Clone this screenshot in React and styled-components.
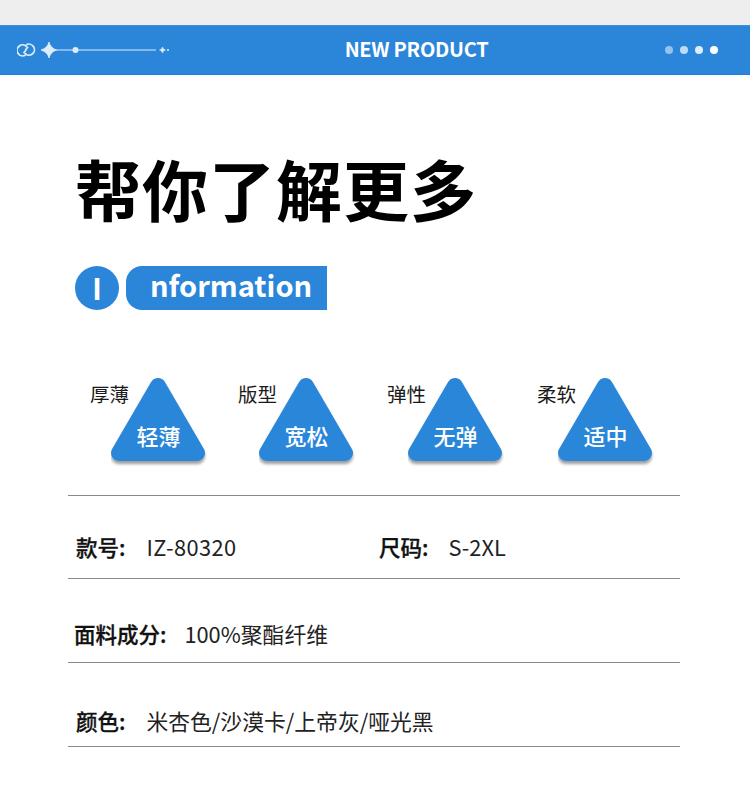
import React from 'react';
import styled, { createGlobalStyle } from 'styled-components';

const blue = '#2b86d9';
const cjk = '"Noto Sans CJK SC", "Noto Sans", sans-serif';

const Global = createGlobalStyle`
    html, body { margin: 0; padding: 0; background: #fff; }
    body { font-family: ${cjk}; color: #111; }
`;

const Page = styled.div`
    width: 750px;
    height: 787px;
    overflow: hidden;
    padding-top: 25px;
    box-sizing: border-box;
    background: linear-gradient(#eeeeee 25px, #fff 25px);
`;

const Header = styled.div`
    height: 50px;
    box-sizing: border-box;
    background: ${blue};
    border-top: 1px solid #3a8fdd;
    border-bottom: 1px solid #1f7fd8;
    padding: 0 32px 0 17px;
    display: grid;
    grid-template-columns: 1fr auto 1fr;
    align-items: center;
`;

const HeaderTitle = styled.div`
    font-size: 20px;
    line-height: 24px;
    font-weight: 700;
    color: #fff;
    letter-spacing: -0.3px;
    transform: translate(49px, -1px);
`;

const Dots = styled.div`
    display: flex;
    gap: 7px;
    justify-content: flex-end;
`;

const Dot = styled.span`
    width: 8px;
    height: 8px;
    border-radius: 50%;
    background: #fff;
    opacity: ${p => p.$o};
`;

const Body = styled.div`
    padding: 72px 70px 0 68px;
`;

const Title = styled.h1`
    margin: 0 0 0 7px;
    font-size: 66px;
    line-height: 80px;
    font-weight: 700;
    color: #000;
    letter-spacing: 1px;
`;

const InfoRow = styled.div`
    margin: 39px 0 0 7px;
    display: flex;
    gap: 7px;
    height: 44px;
`;

const InfoCircle = styled.div`
    width: 44px;
    height: 44px;
    border-radius: 50%;
    background: ${blue};
    color: #fff;
    font-size: 29px;
    line-height: 42px;
    font-weight: 700;
    text-align: center;
`;

const InfoPill = styled.div`
    width: 201px;
    height: 44px;
    box-sizing: border-box;
    border-radius: 16px 0 0 16px;
    background: ${blue};
    color: #fff;
    font-size: 29px;
    font-weight: 700;
    line-height: 36px;
    padding-left: 24px;
`;

const Traits = styled.div`
    margin-top: 68px;
    display: flex;
    padding-left: 22px;
`;

const Trait = styled.div`
    position: relative;
    width: ${p => p.$w}px;
    height: 90px;
    flex: none;
`;

const TraitLabel = styled.div`
    font-size: 19.5px;
    line-height: 26px;
    color: #1a1a1a;
    padding-top: 3px;
`;

const Triangle = styled.svg`
    position: absolute;
    left: 21px;
    top: 0;
    width: 96px;
    height: 90px;
`;

const TriangleText = styled.div`
    position: absolute;
    left: 21px;
    top: 41px;
    width: 95px;
    text-align: center;
    color: #fff;
    font-size: 22px;
    line-height: 32px;
    font-weight: 500;
`;

const SpecList = styled.div`
    margin-top: 27px;
    border-top: 1px solid #8a8a8a;
`;

const SpecRow = styled.div`
    height: ${p => p.$h}px;
    box-sizing: border-box;
    border-bottom: 1px solid #8a8a8a;
    display: flex;
    align-items: flex-start;
    padding-top: ${p => p.$top}px;
    padding-left: ${p => p.$pad || 8}px;
    font-size: 21.8px;
    line-height: 32px;
    color: #222;
`;

const SpecItem = styled.div`
    width: ${p => (p.$w ? p.$w + 'px' : 'auto')};
    display: flex;
`;

const SpecKey = styled.span`
    font-size: 21.5px;
    font-weight: 500;
    color: #111;
    -webkit-text-stroke: 0.3px #111;
    margin-right: ${p => p.$gap || 20}px;
`;

const Code = styled.span`
    letter-spacing: 0.4px;
`;

const traits = [
    { label: '厚薄', value: '轻薄', w: 148 },
    { label: '版型', value: '宽松', w: 149 },
    { label: '弹性', value: '无弹', w: 150 },
    { label: '柔软', value: '适中', w: 120 },
];

const App = () => (
    <Page>
        <Global />
        <Header>
            <svg width="155" height="20" viewBox="0 0 155 20">
                <g fill="none" stroke="#dcecfa" strokeWidth="1.800">
                    <path d="M9.800 6.800 A5.500 5.500 0 1 0 8.500 15" />
                    <path d="M7.700 13.200 A5.500 5.500 0 1 0 9 5" />
                    <path d="M11 6.800 L8.500 10 M9 10 L6.500 13.200" />
                </g>
                <path d="M32 2 Q33.500 8 39.500 10 Q33.500 12 32 18 Q30.500 12 24 10 Q30.500 8 32 2Z" fill="#dcecfa" stroke="#dcecfa" strokeWidth="0.8" strokeLinejoin="round" />
                <circle cx="58.500" cy="10" r="3" fill="#dcecfa" />
                <path d="M36 10H139" stroke="#dcecfa" strokeWidth="1.200" />
                <path d="M145.500 7 Q146 9.500 148.500 10 Q146 10.500 145.500 13 Q145 10.500 142.500 10 Q145 9.500 145.500 7Z" fill="#dcecfa" stroke="#dcecfa" strokeWidth="0.5" />
                <circle cx="151" cy="10" r="1" fill="#dcecfa" />
            </svg>
            <HeaderTitle>NEW PRODUCT</HeaderTitle>
            <Dots>
                <Dot $o={0.5} />
                <Dot $o={0.7} />
                <Dot $o={0.85} />
                <Dot $o={1} />
            </Dots>
        </Header>
        <Body>
            <Title>帮你了解更多</Title>
            <InfoRow>
                <InfoCircle>I</InfoCircle>
                <InfoPill>nformation</InfoPill>
            </InfoRow>
            <Traits>
                {traits.map(t => (
                    <Trait key={t.label} $w={t.w}>
                        <TraitLabel>{t.label}</TraitLabel>
                        <Triangle viewBox="0 0 96 90">
                            <defs>
                                <filter id="shade" filterUnits="userSpaceOnUse" x="-4" y="-4" width="104" height="98">
                                    <feDropShadow dx="0" dy="3" stdDeviation="1.500" floodColor="#000" floodOpacity="0.38" />
                                </filter>
                            </defs>
                            <polygon
                                points="47,8 86,75 8,75"
                                fill={blue}
                                stroke={blue}
                                strokeWidth="16"
                                strokeLinejoin="round"
                                filter="url(#shade)"
                            />
                        </Triangle>
                        <TriangleText>{t.value}</TriangleText>
                    </Trait>
                ))}
            </Traits>
            <SpecList>
                <SpecRow $h={83} $top={35}>
                    <SpecItem $w={303}>
                        <SpecKey $gap={21}>款号:</SpecKey><Code>IZ-80320</Code>
                    </SpecItem>
                    <SpecItem>
                        <SpecKey $gap={20}>尺码:</SpecKey>S-2XL
                    </SpecItem>
                </SpecRow>
                <SpecRow $h={84} $top={39} $pad={6}>
                    <SpecKey $gap={18}>面料成分:</SpecKey>100%聚酯纤维
                </SpecRow>
                <SpecRow $h={84} $top={42}>
                    <SpecKey $gap={21}>颜色:</SpecKey>米杏色/沙漠卡/上帝灰/哑光黑
                </SpecRow>
            </SpecList>
        </Body>
    </Page>
);

export default App;
